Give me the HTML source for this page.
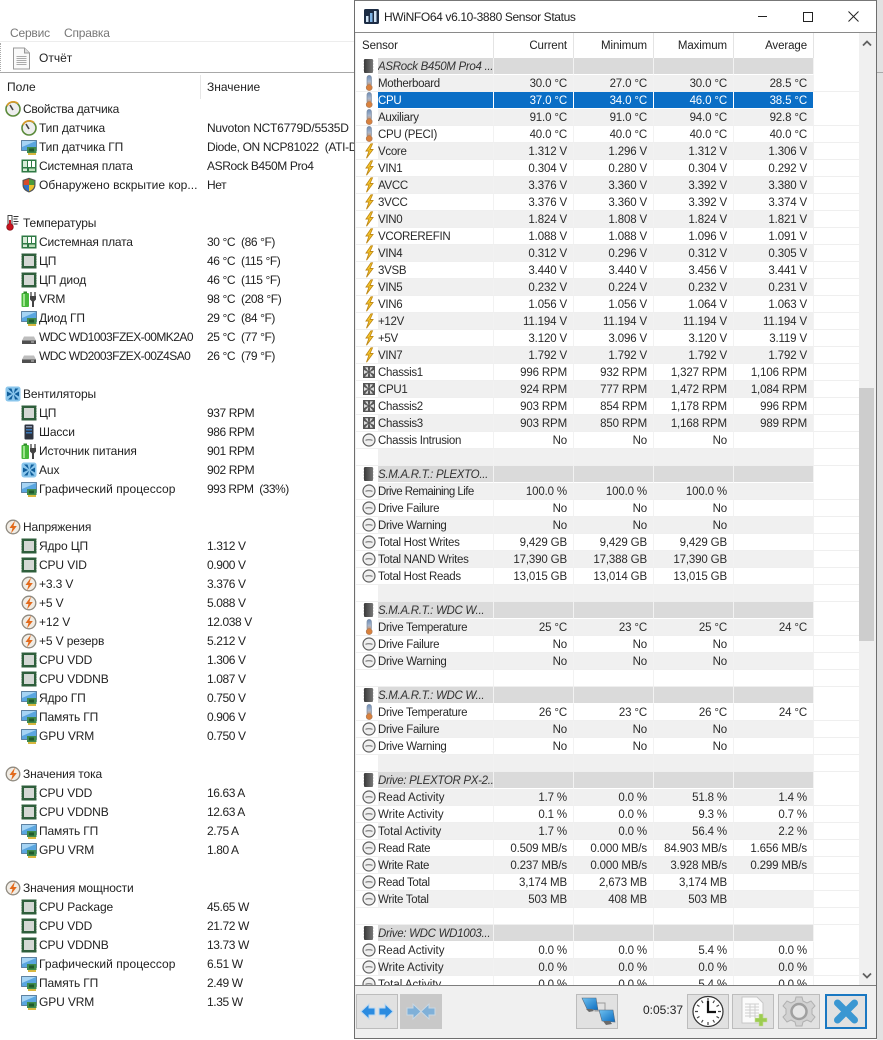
<!DOCTYPE html>
<html><head><meta charset="utf-8"><title>HWiNFO64</title>
<style>
html,body{margin:0;padding:0;width:883px;height:1040px;overflow:hidden;background:#fff;font-family:"Liberation Sans",sans-serif;color:#222}
.a{position:absolute;white-space:nowrap}
#L{position:absolute;left:0;top:0;width:355px;height:1040px;overflow:hidden;font-size:12px;line-height:19px}
#L .g,#L .c,#L .v{position:absolute;white-space:nowrap;height:19px;margin-top:1px;letter-spacing:-.12px}
#L .g{left:23px}#L .c{left:39px}#L .v{left:207px;letter-spacing:-.4px}
#L .t{letter-spacing:-.55px}#L .p{letter-spacing:.05px}
#L svg{position:absolute;width:16px;height:16px}
#W{position:absolute;left:354px;top:0;width:523px;height:1039px;background:#f0f0f0;border:1px solid #6e6e6e;border-top-color:#777;box-sizing:border-box;overflow:hidden}
#T{position:absolute;left:0;top:0;width:521px;height:31px;background:#fff;border-bottom:1px solid #8a8a8a}
#B{position:absolute;left:1px;top:32px;width:504px;height:952px;background:#fff;overflow:hidden}
#H{position:absolute;left:0;top:0;height:25px;font-size:11.5px;letter-spacing:-.1px}
#H div{position:absolute;top:0;height:25px;line-height:26px;border-right:1px solid #e4e4e4;text-align:right;box-sizing:border-box;padding-right:6px}
table{position:absolute;left:0;top:25px;border-collapse:separate;border-spacing:0;table-layout:fixed;width:503px;font-size:11.5px}
td{height:17px;box-sizing:border-box;border-bottom:1px solid #efefef;border-right:1px solid #f2f2f2;text-align:right;padding:2px 6px 0 0;line-height:14px;overflow:hidden;white-space:nowrap;color:#2a2a2a;letter-spacing:-.15px}
td:nth-child(1){padding:0;border-right:0;text-align:left;background:#fff!important}
td:nth-child(2){text-align:left;padding-left:0;padding-right:0;letter-spacing:-.3px}
td.z:nth-child(2){letter-spacing:0}
td:nth-child(7){background:#fff!important;padding:0;border-right:0}
tr:nth-child(even) td{background:#f0f0f0}
tr.sel td{background:#0a6ec6!important;color:#fff;border-right:1px solid #fff;border-bottom:1px solid #fff}
tr.sel td:nth-child(1),tr.sel td:nth-child(7){background:#fff!important;border-right:0;color:#222}
tr.gr td{background:#dadada!important;border-right:1px solid #f2f2f2;border-bottom:1px solid #fff;color:#333}
tr.gr td:nth-child(1),tr.gr td:nth-child(7){background:#fff!important;border-right:0}
tr.gr td:nth-child(2){font-style:italic}
td svg{display:block;width:16px;height:16px;margin-left:5px}
.btn{position:absolute;top:993px;width:42px;height:35px;box-sizing:border-box;border:1px solid #bcbcbc;background:#e1e1e1}
.btn svg{position:absolute;left:0;top:0;width:40px;height:33px}
</style></head><body>
<svg width="0" height="0" style="position:absolute">
<defs>
<linearGradient id="th" x1="0" y1="0" x2="0" y2="1"><stop offset="0" stop-color="#6d8cb5"/><stop offset=".55" stop-color="#a8b6cc"/><stop offset="1" stop-color="#d98a4a"/></linearGradient>
<linearGradient id="bl" x1="0" y1="0" x2="1" y2="1"><stop offset="0" stop-color="#6fc1f0"/><stop offset="1" stop-color="#0b6cc0"/></linearGradient>
<linearGradient id="kk" x1="0" y1="0" x2="1" y2="0"><stop offset="0" stop-color="#3a3a3a"/><stop offset="1" stop-color="#777"/></linearGradient>
<symbol id="t" viewBox="0 0 16 16"><rect x="6" y="0.500" width="4.400" height="11" rx="2.200" fill="url(#th)" stroke="#7b8aa0" stroke-width=".7"/><circle cx="8.200" cy="12.600" r="3" fill="#d9813d" stroke="#a77a5c" stroke-width=".6"/></symbol>
<symbol id="b" viewBox="0 0 16 16"><path d="M10 .8 5 8h3L5.500 15.200 12 6.500H9L11.500.8z" fill="#f7c62a" stroke="#c08a18" stroke-width=".9"/></symbol>
<symbol id="f" viewBox="0 0 16 16"><rect x="2" y="2" width="12" height="12" fill="#555"/><g fill="#dcdcdc"><path d="M7.300 7.300 4 3.500l2.800-.3zM8.700 7.300 12 3.500l-2.800-.3zM7.300 8.700 4 12.500l2.800.3zM8.700 8.700 12 12.500l-2.800.3zM7 8 3 6v4zM9 8l4-2v4z"/></g></symbol>
<symbol id="o" viewBox="0 0 16 16"><circle cx="8" cy="8" r="6" fill="#efefef" stroke="#606060" stroke-width="1.200"/><path d="M4.500 8.300c1.500-.8 5-.8 7 0" fill="none" stroke="#666" stroke-width="1"/></symbol>
<symbol id="k" viewBox="0 0 16 16"><rect x="3" y="1" width="9" height="14" rx="1" fill="url(#kk)"/><g stroke="#999" stroke-width=".6"><path d="M12 3h1M12 6h1M12 9h1M12 12h1M2 3h1M2 6h1M2 9h1M2 12h1"/></g></symbol>
<symbol id="gau" viewBox="0 0 16 16"><circle cx="8" cy="8" r="7" fill="#eee" stroke="#5a8a3a" stroke-width="1.600"/><path d="M2 5a7 7 0 0 1 11-2.500" fill="none" stroke="#d89a2a" stroke-width="1.600"/><path d="M8 9 5 4" stroke="#444" stroke-width="1.600"/></symbol>
<symbol id="mon" viewBox="0 0 16 16"><rect x="0.500" y="1.500" width="15" height="10" fill="#5aa6e0" stroke="#4a6f90" stroke-width=".8"/><path d="M1 2h14L1 8z" fill="#a6d4f4"/><rect x="6" y="8" width="9.500" height="6" fill="#3f8b4c"/><rect x="8" y="9.500" width="5" height="3" fill="#205a2c"/><path d="M7 14h8v2H7z" fill="#d8b840"/></symbol>
<symbol id="mb" viewBox="0 0 16 16"><rect x=".5" y="1.500" width="15" height="13" fill="#2f7a45"/><rect x="2" y="3" width="4" height="6" fill="#d8ecd8"/><rect x="7" y="3" width="3" height="6" fill="#fff"/><rect x="11" y="3" width="3" height="6" fill="#fff"/><rect x="2" y="10.500" width="4" height="2.500" fill="#d8ecd8"/><rect x="8" y="10.500" width="6" height="2.500" fill="#b9dcb9"/></symbol>
<symbol id="sh" viewBox="0 0 16 16"><path d="M8 .8 14.500 3v5c0 4-3 6.400-6.500 7.500C4.500 14.400 1.500 12 1.500 8V3z" fill="#555"/><path d="M8 2 2.700 3.800V8H8z" fill="#d84a2a"/><path d="M8 2l5.300 1.800V8H8z" fill="#4a9a3a"/><path d="M2.700 8H8v6.200C5 13.200 2.900 11 2.700 8z" fill="#2f70c8"/><path d="M13.300 8H8v6.200c3-1 5.100-3.200 5.300-6.200z" fill="#eec12a"/></symbol>
<symbol id="cp" viewBox="0 0 16 16"><rect x=".5" y=".5" width="15" height="15" fill="#2f5f3c"/><rect x="3" y="3" width="10" height="10" fill="#d4d8d4"/><path d="M0 2.500h1M0 5h1M0 7.500h1M0 10h1M0 12.500h1M15 2.500h1M15 5h1M15 7.500h1M15 10h1M15 12.500h1" stroke="#bcd0bc"/></symbol>
<symbol id="ps" viewBox="0 0 16 16"><rect x="0.500" y="2" width="7.500" height="14" rx="1" fill="#46b83a"/><rect x="2.500" y="0.500" width="3.500" height="2" fill="#2f8a28"/><rect x="2" y="3" width="2" height="12" fill="#9ee48e"/><path d="M10 1v4M14 1v4" stroke="#444" stroke-width="1.300"/><path d="M9 5h6v3.500l-2 2V16h-2v-5.500l-2-2z" fill="#444"/></symbol>
<symbol id="hd" viewBox="0 0 16 16"><path d="M3 7.500h10l2 4v3.500H1v-3.500z" fill="#bdbdbd"/><rect x="1" y="11.500" width="14" height="3.500" fill="#4f4f4f"/><rect x="10" y="12.500" width="3" height="1" fill="#ccc"/></symbol>
<symbol id="fa" viewBox="0 0 16 16"><rect x=".5" y=".5" width="15" height="15" rx="2.500" fill="#8ac6ec"/><g fill="#0f5d9a"><path d="M8 7.200 3 2.500h3.500zM8 8.800 3 13.500h3.500zM8.800 7.200 13.500 2.500H10zM8.800 8.800l4.700 4.700H10zM7 8 2 5.500v5zM9.500 8l4.500-2.500v5z"/></g></symbol>
<symbol id="tw" viewBox="0 0 16 16"><rect x="3.500" y=".5" width="9" height="15" rx="1" fill="#2e3440"/><rect x="5" y="2" width="6" height="1.500" fill="#8f9bb0"/><rect x="5" y="5" width="6" height="1.500" fill="#3b78b8"/><rect x="5" y="8" width="6" height="1.500" fill="#3b78b8"/></symbol>
<symbol id="bo" viewBox="0 0 16 16"><circle cx="8" cy="8" r="6.800" fill="#f1ece4" stroke="#8f8a80" stroke-width="1.300"/><path d="M10 1.500 4.500 9h3L6 14.500 11.800 7H8.500z" fill="#e26a1c"/></symbol>
<symbol id="rt" viewBox="0 0 16 16"><rect x="3" y="0.500" width="4" height="10" fill="#fff" stroke="#333" stroke-width=".9"/><circle cx="5" cy="12" r="3.300" fill="#c8141e" stroke="#7a0c10" stroke-width=".7"/><rect x="4" y="5" width="2" height="6" fill="#c8141e"/><path d="M8.500 1.500h5M8.500 4h4M8.500 6.500h5M8.500 9h4" stroke="#333" stroke-width="1"/></symbol>
</defs></svg>

<div id="L">
<div class="a" style="left:10px;top:25px;line-height:16px;color:#777;letter-spacing:-.2px">Сервис</div>
<div class="a" style="left:64px;top:25px;line-height:16px;color:#777;letter-spacing:-.2px">Справка</div>
<div class="a" style="left:0;top:41px;width:355px;height:32px;border-top:1px solid #ededed;border-bottom:1px solid #a8a8a8;box-sizing:border-box"></div>
<div class="a" style="left:0;top:43px;width:1px;height:28px;border-left:1px dotted #aaa"></div>
<svg style="left:12px;top:47px;width:19px;height:23px" viewBox="0 0 19 23"><path d="M1.500 1h11l5 5v16h-16z" fill="#fafafa" stroke="#999"/><path d="M12.500 1v5h5" fill="#ddd" stroke="#999"/><path d="M4.500 9.500h10M4.500 11.500h10M4.500 13.500h10M4.500 15.500h10M4.500 17.500h10" stroke="#aaa"/></svg>
<div class="a" style="left:39px;top:50px;line-height:16px">Отчёт</div>
<div class="a" style="left:7px;top:79px;line-height:16px">Поле</div>
<div class="a" style="left:207px;top:79px;line-height:16px">Значение</div>
<div class="a" style="left:200px;top:75px;width:1px;height:24px;background:#e6e6e6"></div>

<svg style="left:5px;top:101px"><use href="#gau"/></svg><div class="g" style="top:99px;letter-spacing:-.25px">Свойства датчика</div>
<svg style="left:21px;top:120px"><use href="#gau"/></svg><div class="c" style="top:118px">Тип датчика</div><div class="v" style="top:118px;letter-spacing:-.23px">Nuvoton NCT6779D/5535D</div>
<svg style="left:21px;top:139px"><use href="#mon"/></svg><div class="c" style="top:137px">Тип датчика ГП</div><div class="v" style="top:137px;letter-spacing:-.35px">Diode, ON NCP81022 &nbsp;(ATI-Dev)</div>
<svg style="left:21px;top:158px"><use href="#mb"/></svg><div class="c" style="top:156px;letter-spacing:-.2px">Системная плата</div><div class="v" style="top:156px">ASRock B450M Pro4</div>
<svg style="left:21px;top:177px"><use href="#sh"/></svg><div class="c p" style="top:175px">Обнаружено вскрытие кор...</div><div class="v" style="top:175px">Нет</div>

<svg style="left:5px;top:215px"><use href="#rt"/></svg><div class="g" style="top:213px">Температуры</div>
<svg style="left:21px;top:234px"><use href="#mb"/></svg><div class="c" style="top:232px;letter-spacing:-.2px">Системная плата</div><div class="v" style="top:232px">30 °C &nbsp;(86 °F)</div>
<svg style="left:21px;top:253px"><use href="#cp"/></svg><div class="c" style="top:251px">ЦП</div><div class="v" style="top:251px">46 °C &nbsp;(115 °F)</div>
<svg style="left:21px;top:272px"><use href="#cp"/></svg><div class="c" style="top:270px">ЦП диод</div><div class="v" style="top:270px">46 °C &nbsp;(115 °F)</div>
<svg style="left:21px;top:291px"><use href="#ps"/></svg><div class="c" style="top:289px">VRM</div><div class="v" style="top:289px">98 °C &nbsp;(208 °F)</div>
<svg style="left:21px;top:310px"><use href="#mon"/></svg><div class="c" style="top:308px">Диод ГП</div><div class="v" style="top:308px">29 °C &nbsp;(84 °F)</div>
<svg style="left:21px;top:329px"><use href="#hd"/></svg><div class="c t" style="top:327px">WDC WD1003FZEX-00MK2A0</div><div class="v" style="top:327px">25 °C &nbsp;(77 °F)</div>
<svg style="left:21px;top:348px"><use href="#hd"/></svg><div class="c t" style="top:346px">WDC WD2003FZEX-00Z4SA0</div><div class="v" style="top:346px">26 °C &nbsp;(79 °F)</div>

<svg style="left:5px;top:386px"><use href="#fa"/></svg><div class="g" style="top:384px">Вентиляторы</div>
<svg style="left:21px;top:405px"><use href="#cp"/></svg><div class="c" style="top:403px">ЦП</div><div class="v" style="top:403px">937 RPM</div>
<svg style="left:21px;top:424px"><use href="#tw"/></svg><div class="c" style="top:422px">Шасси</div><div class="v" style="top:422px">986 RPM</div>
<svg style="left:21px;top:443px"><use href="#ps"/></svg><div class="c" style="top:441px">Источник питания</div><div class="v" style="top:441px">901 RPM</div>
<svg style="left:21px;top:462px"><use href="#fa"/></svg><div class="c" style="top:460px">Aux</div><div class="v" style="top:460px">902 RPM</div>
<svg style="left:21px;top:481px"><use href="#mon"/></svg><div class="c p" style="top:479px">Графический процессор</div><div class="v" style="top:479px;letter-spacing:-.5px">993 RPM &nbsp;(33%)</div>

<svg style="left:5px;top:519px"><use href="#bo"/></svg><div class="g" style="top:517px">Напряжения</div>
<svg style="left:21px;top:538px"><use href="#cp"/></svg><div class="c" style="top:536px">Ядро ЦП</div><div class="v" style="top:536px">1.312 V</div>
<svg style="left:21px;top:557px"><use href="#cp"/></svg><div class="c" style="top:555px">CPU VID</div><div class="v" style="top:555px">0.900 V</div>
<svg style="left:21px;top:576px"><use href="#bo"/></svg><div class="c" style="top:574px">+3.3 V</div><div class="v" style="top:574px">3.376 V</div>
<svg style="left:21px;top:595px"><use href="#bo"/></svg><div class="c" style="top:593px">+5 V</div><div class="v" style="top:593px">5.088 V</div>
<svg style="left:21px;top:614px"><use href="#bo"/></svg><div class="c" style="top:612px">+12 V</div><div class="v" style="top:612px">12.038 V</div>
<svg style="left:21px;top:633px"><use href="#bo"/></svg><div class="c" style="top:631px">+5 V резерв</div><div class="v" style="top:631px">5.212 V</div>
<svg style="left:21px;top:652px"><use href="#cp"/></svg><div class="c" style="top:650px">CPU VDD</div><div class="v" style="top:650px">1.306 V</div>
<svg style="left:21px;top:671px"><use href="#cp"/></svg><div class="c" style="top:669px">CPU VDDNB</div><div class="v" style="top:669px">1.087 V</div>
<svg style="left:21px;top:690px"><use href="#mon"/></svg><div class="c" style="top:688px">Ядро ГП</div><div class="v" style="top:688px">0.750 V</div>
<svg style="left:21px;top:709px"><use href="#mon"/></svg><div class="c" style="top:707px">Память ГП</div><div class="v" style="top:707px">0.906 V</div>
<svg style="left:21px;top:728px"><use href="#mon"/></svg><div class="c" style="top:726px">GPU VRM</div><div class="v" style="top:726px">0.750 V</div>

<svg style="left:5px;top:766px"><use href="#bo"/></svg><div class="g" style="top:764px">Значения тока</div>
<svg style="left:21px;top:785px"><use href="#cp"/></svg><div class="c" style="top:783px">CPU VDD</div><div class="v" style="top:783px">16.63 A</div>
<svg style="left:21px;top:804px"><use href="#cp"/></svg><div class="c" style="top:802px">CPU VDDNB</div><div class="v" style="top:802px">12.63 A</div>
<svg style="left:21px;top:823px"><use href="#mon"/></svg><div class="c" style="top:821px">Память ГП</div><div class="v" style="top:821px">2.75 A</div>
<svg style="left:21px;top:842px"><use href="#mon"/></svg><div class="c" style="top:840px">GPU VRM</div><div class="v" style="top:840px">1.80 A</div>

<svg style="left:5px;top:880px"><use href="#bo"/></svg><div class="g" style="top:878px">Значения мощности</div>
<svg style="left:21px;top:899px"><use href="#cp"/></svg><div class="c" style="top:897px">CPU Package</div><div class="v" style="top:897px">45.65 W</div>
<svg style="left:21px;top:918px"><use href="#cp"/></svg><div class="c" style="top:916px">CPU VDD</div><div class="v" style="top:916px">21.72 W</div>
<svg style="left:21px;top:937px"><use href="#cp"/></svg><div class="c" style="top:935px">CPU VDDNB</div><div class="v" style="top:935px">13.73 W</div>
<svg style="left:21px;top:956px"><use href="#mon"/></svg><div class="c p" style="top:954px">Графический процессор</div><div class="v" style="top:954px">6.51 W</div>
<svg style="left:21px;top:975px"><use href="#mon"/></svg><div class="c" style="top:973px">Память ГП</div><div class="v" style="top:973px">2.49 W</div>
<svg style="left:21px;top:994px"><use href="#mon"/></svg><div class="c" style="top:992px">GPU VRM</div><div class="v" style="top:992px">1.35 W</div>
</div>

<div class="a" style="left:877px;top:0;width:6px;height:1040px;background:#e2e2e2"></div>
<div class="a" style="left:877px;top:72px;width:6px;height:1px;background:#a8a8a8"></div>

<div id="W">
<div id="T">
<svg class="a" style="left:9px;top:8px;width:15px;height:15px" viewBox="0 0 15 15"><rect width="15" height="15" rx="1.500" fill="#1c2c44"/><rect x="2" y="7" width="2.500" height="6" fill="#cfe2f4"/><rect x="6" y="4" width="2.500" height="9" fill="#7fb4e6"/><rect x="10" y="2" width="2.500" height="11" fill="#cfe2f4"/></svg>
<div class="a" style="left:29px;top:8px;font-size:12px;line-height:16px;color:#222;letter-spacing:-.36px">HWiNFO64 v6.10-3880 Sensor Status</div>
<div class="a" style="left:403px;top:15px;width:9px;height:1px;background:#222"></div>
<div class="a" style="left:448px;top:11px;width:8px;height:8px;border:1px solid #222"></div>
<svg class="a" style="left:493px;top:10px;width:11px;height:11px" viewBox="0 0 11 11"><path d="M.5.5l10 10M10.500.5l-10 10" stroke="#222" stroke-width="1"/></svg>
</div>
<div id="B">
<div id="H">
<div style="left:0;width:138px;text-align:left;padding-left:6px">Sensor</div>
<div style="left:138px;width:80px">Current</div>
<div style="left:218px;width:80px">Minimum</div>
<div style="left:298px;width:80px">Maximum</div>
<div style="left:378px;width:80px">Average</div>
</div>
<table>
<colgroup><col style="width:22px"><col style="width:116px"><col style="width:80px"><col style="width:80px"><col style="width:80px"><col style="width:80px"><col style="width:45px"></colgroup>
<tr class="gr"><td><svg><use href="#k"/></svg></td><td>ASRock B450M Pro4 ...</td><td></td><td></td><td></td><td></td><td></td></tr>
<tr><td><svg><use href="#t"/></svg></td><td>Motherboard</td><td>30.0 °C</td><td>27.0 °C</td><td>30.0 °C</td><td>28.5 °C</td><td></td></tr>
<tr class="sel"><td><svg><use href="#t"/></svg></td><td>CPU</td><td>37.0 °C</td><td>34.0 °C</td><td>46.0 °C</td><td>38.5 °C</td><td></td></tr>
<tr><td><svg><use href="#t"/></svg></td><td>Auxiliary</td><td>91.0 °C</td><td>91.0 °C</td><td>94.0 °C</td><td>92.8 °C</td><td></td></tr>
<tr><td><svg><use href="#t"/></svg></td><td>CPU (PECI)</td><td>40.0 °C</td><td>40.0 °C</td><td>40.0 °C</td><td>40.0 °C</td><td></td></tr>
<tr><td><svg><use href="#b"/></svg></td><td>Vcore</td><td>1.312 V</td><td>1.296 V</td><td>1.312 V</td><td>1.306 V</td><td></td></tr>
<tr><td><svg><use href="#b"/></svg></td><td>VIN1</td><td>0.304 V</td><td>0.280 V</td><td>0.304 V</td><td>0.292 V</td><td></td></tr>
<tr><td><svg><use href="#b"/></svg></td><td>AVCC</td><td>3.376 V</td><td>3.360 V</td><td>3.392 V</td><td>3.380 V</td><td></td></tr>
<tr><td><svg><use href="#b"/></svg></td><td>3VCC</td><td>3.376 V</td><td>3.360 V</td><td>3.392 V</td><td>3.374 V</td><td></td></tr>
<tr><td><svg><use href="#b"/></svg></td><td>VIN0</td><td>1.824 V</td><td>1.808 V</td><td>1.824 V</td><td>1.821 V</td><td></td></tr>
<tr><td><svg><use href="#b"/></svg></td><td>VCOREREFIN</td><td>1.088 V</td><td>1.088 V</td><td>1.096 V</td><td>1.091 V</td><td></td></tr>
<tr><td><svg><use href="#b"/></svg></td><td>VIN4</td><td>0.312 V</td><td>0.296 V</td><td>0.312 V</td><td>0.305 V</td><td></td></tr>
<tr><td><svg><use href="#b"/></svg></td><td>3VSB</td><td>3.440 V</td><td>3.440 V</td><td>3.456 V</td><td>3.441 V</td><td></td></tr>
<tr><td><svg><use href="#b"/></svg></td><td>VIN5</td><td>0.232 V</td><td>0.224 V</td><td>0.232 V</td><td>0.231 V</td><td></td></tr>
<tr><td><svg><use href="#b"/></svg></td><td>VIN6</td><td>1.056 V</td><td>1.056 V</td><td>1.064 V</td><td>1.063 V</td><td></td></tr>
<tr><td><svg><use href="#b"/></svg></td><td>+12V</td><td>11.194 V</td><td>11.194 V</td><td>11.194 V</td><td>11.194 V</td><td></td></tr>
<tr><td><svg><use href="#b"/></svg></td><td>+5V</td><td>3.120 V</td><td>3.096 V</td><td>3.120 V</td><td>3.119 V</td><td></td></tr>
<tr><td><svg><use href="#b"/></svg></td><td>VIN7</td><td>1.792 V</td><td>1.792 V</td><td>1.792 V</td><td>1.792 V</td><td></td></tr>
<tr><td><svg><use href="#f"/></svg></td><td>Chassis1</td><td>996 RPM</td><td>932 RPM</td><td>1,327 RPM</td><td>1,106 RPM</td><td></td></tr>
<tr><td><svg><use href="#f"/></svg></td><td>CPU1</td><td>924 RPM</td><td>777 RPM</td><td>1,472 RPM</td><td>1,084 RPM</td><td></td></tr>
<tr><td><svg><use href="#f"/></svg></td><td>Chassis2</td><td>903 RPM</td><td>854 RPM</td><td>1,178 RPM</td><td>996 RPM</td><td></td></tr>
<tr><td><svg><use href="#f"/></svg></td><td>Chassis3</td><td>903 RPM</td><td>850 RPM</td><td>1,168 RPM</td><td>989 RPM</td><td></td></tr>
<tr><td><svg><use href="#o"/></svg></td><td>Chassis Intrusion</td><td>No</td><td>No</td><td>No</td><td></td><td></td></tr>
<tr><td></td><td></td><td></td><td></td><td></td><td></td><td></td></tr>
<tr class="gr"><td><svg><use href="#k"/></svg></td><td>S.M.A.R.T.: PLEXTO...</td><td></td><td></td><td></td><td></td><td></td></tr>
<tr><td><svg><use href="#o"/></svg></td><td style="letter-spacing:-.55px">Drive Remaining Life</td><td>100.0 %</td><td>100.0 %</td><td>100.0 %</td><td></td><td></td></tr>
<tr><td><svg><use href="#o"/></svg></td><td>Drive Failure</td><td>No</td><td>No</td><td>No</td><td></td><td></td></tr>
<tr><td><svg><use href="#o"/></svg></td><td>Drive Warning</td><td>No</td><td>No</td><td>No</td><td></td><td></td></tr>
<tr><td><svg><use href="#o"/></svg></td><td>Total Host Writes</td><td>9,429 GB</td><td>9,429 GB</td><td>9,429 GB</td><td></td><td></td></tr>
<tr><td><svg><use href="#o"/></svg></td><td>Total NAND Writes</td><td>17,390 GB</td><td>17,388 GB</td><td>17,390 GB</td><td></td><td></td></tr>
<tr><td><svg><use href="#o"/></svg></td><td>Total Host Reads</td><td>13,015 GB</td><td>13,014 GB</td><td>13,015 GB</td><td></td><td></td></tr>
<tr><td></td><td></td><td></td><td></td><td></td><td></td><td></td></tr>
<tr class="gr"><td><svg><use href="#k"/></svg></td><td>S.M.A.R.T.: WDC W...</td><td></td><td></td><td></td><td></td><td></td></tr>
<tr><td><svg><use href="#t"/></svg></td><td>Drive Temperature</td><td>25 °C</td><td>23 °C</td><td>25 °C</td><td>24 °C</td><td></td></tr>
<tr><td><svg><use href="#o"/></svg></td><td>Drive Failure</td><td>No</td><td>No</td><td>No</td><td></td><td></td></tr>
<tr><td><svg><use href="#o"/></svg></td><td>Drive Warning</td><td>No</td><td>No</td><td>No</td><td></td><td></td></tr>
<tr><td></td><td></td><td></td><td></td><td></td><td></td><td></td></tr>
<tr class="gr"><td><svg><use href="#k"/></svg></td><td>S.M.A.R.T.: WDC W...</td><td></td><td></td><td></td><td></td><td></td></tr>
<tr><td><svg><use href="#t"/></svg></td><td>Drive Temperature</td><td>26 °C</td><td>23 °C</td><td>26 °C</td><td>24 °C</td><td></td></tr>
<tr><td><svg><use href="#o"/></svg></td><td>Drive Failure</td><td>No</td><td>No</td><td>No</td><td></td><td></td></tr>
<tr><td><svg><use href="#o"/></svg></td><td>Drive Warning</td><td>No</td><td>No</td><td>No</td><td></td><td></td></tr>
<tr><td></td><td></td><td></td><td></td><td></td><td></td><td></td></tr>
<tr class="gr"><td><svg><use href="#k"/></svg></td><td>Drive: PLEXTOR PX-2...</td><td></td><td></td><td></td><td></td><td></td></tr>
<tr><td><svg><use href="#o"/></svg></td><td class="z">Read Activity</td><td>1.7 %</td><td>0.0 %</td><td>51.8 %</td><td>1.4 %</td><td></td></tr>
<tr><td><svg><use href="#o"/></svg></td><td class="z">Write Activity</td><td>0.1 %</td><td>0.0 %</td><td>9.3 %</td><td>0.7 %</td><td></td></tr>
<tr><td><svg><use href="#o"/></svg></td><td class="z">Total Activity</td><td>1.7 %</td><td>0.0 %</td><td>56.4 %</td><td>2.2 %</td><td></td></tr>
<tr><td><svg><use href="#o"/></svg></td><td>Read Rate</td><td>0.509 MB/s</td><td>0.000 MB/s</td><td>84.903 MB/s</td><td>1.656 MB/s</td><td></td></tr>
<tr><td><svg><use href="#o"/></svg></td><td>Write Rate</td><td>0.237 MB/s</td><td>0.000 MB/s</td><td>3.928 MB/s</td><td>0.299 MB/s</td><td></td></tr>
<tr><td><svg><use href="#o"/></svg></td><td>Read Total</td><td>3,174 MB</td><td>2,673 MB</td><td>3,174 MB</td><td></td><td></td></tr>
<tr><td><svg><use href="#o"/></svg></td><td>Write Total</td><td>503 MB</td><td>408 MB</td><td>503 MB</td><td></td><td></td></tr>
<tr><td></td><td></td><td></td><td></td><td></td><td></td><td></td></tr>
<tr class="gr"><td><svg><use href="#k"/></svg></td><td>Drive: WDC WD1003...</td><td></td><td></td><td></td><td></td><td></td></tr>
<tr><td><svg><use href="#o"/></svg></td><td class="z">Read Activity</td><td>0.0 %</td><td>0.0 %</td><td>5.4 %</td><td>0.0 %</td><td></td></tr>
<tr><td><svg><use href="#o"/></svg></td><td class="z">Write Activity</td><td>0.0 %</td><td>0.0 %</td><td>0.0 %</td><td>0.0 %</td><td></td></tr>
<tr><td><svg><use href="#o"/></svg></td><td class="z">Total Activity</td><td>0.0 %</td><td>0.0 %</td><td>5.4 %</td><td>0.0 %</td><td></td></tr>
</table>
</div>
<!-- scrollbar -->
<div class="a" style="left:504px;top:32px;width:16px;height:952px;background:#f0f0f0"></div>
<svg class="a" style="left:507px;top:39px;width:10px;height:7px" viewBox="0 0 10 7"><path d="M1 5.500 5 1.500l4 4" fill="none" stroke="#606060" stroke-width="1.800"/></svg>
<div class="a" style="left:504px;top:387px;width:15px;height:253px;background:#cdcdcd"></div>
<svg class="a" style="left:507px;top:971px;width:10px;height:7px" viewBox="0 0 10 7"><path d="M1 1.500 5 5.500l4-4" fill="none" stroke="#606060" stroke-width="1.800"/></svg>
<div class="a" style="left:0;top:984px;width:521px;height:1px;background:#7d7d7d"></div>

<div class="btn" style="left:1px">
<svg viewBox="0 0 40 33"><path d="M4 16.500 12 9v4h6v7h-6v4z" fill="#2a8be0" stroke="#b9d8f2"/><path d="M36 16.500 28 9v4h-6v7h6v4z" fill="#2a8be0" stroke="#b9d8f2"/></svg></div>
<div class="btn" style="left:45px;background:#c8c8c8;border-color:#c8c8c8">
<svg viewBox="0 0 40 33"><path d="M20 16.500 12 9v4H6v7h6v4z" fill="#7fb0d8" stroke="#c9d8e4"/><path d="M20 16.500 28 9v4h6v7h-6v4z" fill="#7fb0d8" stroke="#c9d8e4"/></svg></div>
<div class="btn" style="left:221px">
<svg viewBox="0 0 40 33"><rect x="18" y="8" width="10" height="8" fill="none" stroke="#9a9a9a"/><path d="M5 3h14l2 12-11-1z" fill="url(#bl)" stroke="#546a80" stroke-width=".6"/><path d="M9 14l3 3 5-1-2-2z" fill="#6a6a6a"/><path d="M22 15h14l2 12-13-1z" fill="url(#bl)" stroke="#546a80" stroke-width=".6"/><path d="M26 26l3 4 6-1-2-3z" fill="#6a6a6a"/></svg></div>
<div class="a" style="left:288px;top:1001px;font-size:12px;line-height:16px;color:#222">0:05:37</div>
<div class="btn" style="left:332px">
<svg viewBox="0 0 40 33"><circle cx="20" cy="16.500" r="15" fill="#fff" stroke="#333" stroke-width="1.200"/><path d="M20 3v3M20 27v3M7 16.500h3M30 16.500h3M13.500 5.500l1.500 2.500M26.500 5.500 25 8M13.500 27.500l1.500-2.500M26.500 27.500 25 25M9 10l2.500 1.500M31 10l-2.500 1.500M9 23l2.500-1.500M31 23l-2.500-1.500" stroke="#444" stroke-width="1.200"/><path d="M20 6v11h8" fill="none" stroke="#111" stroke-width="2.200"/></svg></div>
<div class="btn" style="left:377px">
<svg viewBox="0 0 40 33"><path d="M9 2h15l6 6v20H9z" fill="#fbfbfb" stroke="#c8c8c8"/><path d="M12 9h14M12 12h14M12 15h14M12 18h14M12 21h14M17 9v14M22 9v14" stroke="#cfcfcf"/><path d="M26 19h4v4h4v4h-4v4h-4v-4h-4v-4h4z" fill="#9ccc50" stroke="#c8dc9c" stroke-width=".6"/></svg></div>
<div class="btn" style="left:423px">
<svg viewBox="0 0 40 33"><path d="M17 2h6l1 4 4 2 4-2 4 5-3 3v5l3 3-4 5-4-2-4 2-1 4h-6l-1-4-4-2-4 2-4-5 3-3v-5l-3-3 4-5 4 2 4-2z" fill="#d2d2d2" stroke="#b0b0b0"/><circle cx="20" cy="16.500" r="7.500" fill="#e6e6e6" stroke="#a0a0a0" stroke-width="2.500"/></svg></div>
<div class="btn" style="left:470px;border:2px solid #1a78c2;width:42px">
<svg style="width:38px;height:31px" viewBox="0 0 38 31"><path d="M10.500 7 27.500 24M27.500 7 10.500 24" stroke="#3a97d2" stroke-width="7" stroke-linecap="round"/></svg></div>
</div>
</body></html>
